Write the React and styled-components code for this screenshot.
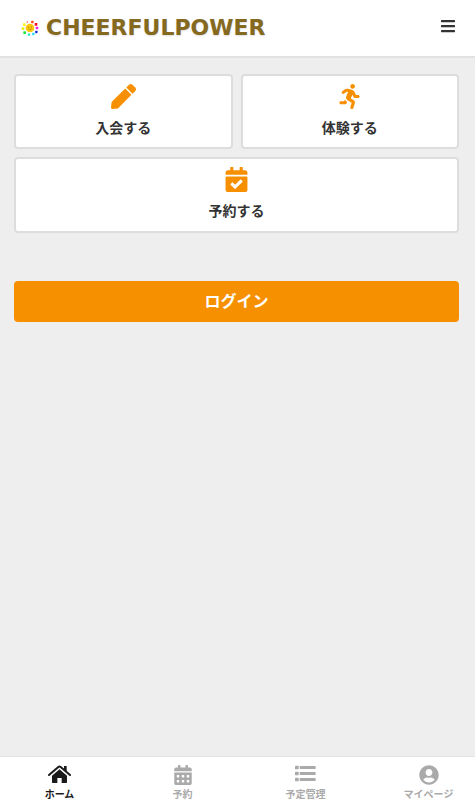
import React from "react";
import styled, { createGlobalStyle } from "styled-components";
import {
  FaBars,
  FaPen,
  FaRunning,
  FaCalendarCheck,
  FaCalendarAlt,
  FaUserCircle,
} from "react-icons/fa";

const GlobalStyle = createGlobalStyle`
  * {
    box-sizing: border-box;
  }

  body {
    margin: 0;
    background-color: white;
    color: #333;
    font-family: "Noto Sans CJK JP", sans-serif;
  }
`;

const Page = styled.div`
  display: flex;
  flex-direction: column;
  min-height: 100vh;
  margin-right: 1px;
  background-color: #eee;
`;

const Header = styled.header`
  display: flex;
  justify-content: space-between;
  align-items: center;
  height: 58px;
  padding: 0 19px 0 20px;
  background-color: white;
  border-bottom: 2px solid #e2e2e2;
`;

const Logo = styled.a`
  display: flex;
  align-items: center;
  gap: 4px;
  color: #85691f;
  font-family: "DejaVu Sans", sans-serif;
  font-size: 22px;
  font-weight: bold;
  line-height: 24px;
  text-decoration: none;
  text-shadow: 0 1px 2px #ddd;
`;

const MenuButton = styled.button`
  display: flex;
  padding: 0;
  border: none;
  background: none;
  color: #333;
  font-size: 16px;
  cursor: pointer;

  svg {
    width: auto;
    height: 16px;
    margin-bottom: 4px;
  }
`;

const Main = styled.main`
  flex: 1;
  padding: 16px 16px 16px 14px;
`;

const Cards = styled.div`
  display: grid;
  grid-template-columns: 1fr 1fr;
  gap: 8px;
`;

const Card = styled.a`
  display: flex;
  flex-direction: column;
  align-items: center;
  gap: 8px;
  height: ${(props) => (props.$wide ? "76px" : "75px")};
  padding-top: 8px;
  grid-column: ${(props) => (props.$wide ? "1 / -1" : "auto")};
  background-color: white;
  border: 2px solid #ddd;
  border-radius: 4px;
  color: #333;
  font-size: 14px;
  font-weight: bold;
  line-height: 20px;
  text-decoration: none;

  svg {
    width: auto;
    height: 25px;
    color: #f79000;
  }
`;

const LoginButton = styled.button`
  width: 100%;
  height: 41px;
  margin-top: 48px;
  padding: 0 0 4px;
  border: none;
  border-radius: 4px;
  background-color: #f79000;
  color: white;
  font-family: inherit;
  font-size: 16px;
  font-weight: bold;
  line-height: 24px;
  cursor: pointer;
`;

const TabBar = styled.nav`
  display: flex;
  justify-content: space-between;
  height: 50px;
  padding: 8px 16px 0 29px;
  background-color: white;
  border-top: 1px solid #e2e2e2;
`;

const Tab = styled.a`
  display: flex;
  flex-direction: column;
  align-items: center;
  gap: 2px;
  width: 61px;
  color: ${(props) => (props.$active ? "#1a1a1a" : "#aaa")};
  font-size: 10px;
  font-weight: bold;
  line-height: 14px;
  text-decoration: none;

  svg {
    flex-shrink: 0;
    width: auto;
    height: 20px;
  }
`;

const petals = [
  { x: 22, y: 12, size: 4, color: "#ff5a4a" },
  { x: 37, y: 12, size: 7, color: "#ff4a10" },
  { x: 48, y: 19, size: 8, color: "#f51020" },
  { x: 51, y: 30, size: 7, color: "#f020e0" },
  { x: 49, y: 42, size: 7, color: "#1830d8" },
  { x: 40, y: 48, size: 7, color: "#20e0f0" },
  { x: 27, y: 50, size: 7, color: "#20e8c0" },
  { x: 14, y: 44, size: 8, color: "#20e840" },
  { x: 9, y: 32, size: 8, color: "#e8f020" },
  { x: 13, y: 20, size: 8, color: "#fff020" },
];

const SunIcon = () => (
  <svg width="22" height="20" viewBox="0 0 66 60" aria-hidden="true">
    {petals.map(({ x, y, size, color }) => (
      <rect
        key={color}
        x={x - size / 2}
        y={y - size / 2}
        width={size}
        height={size}
        rx="1"
        fill={color}
      />
    ))}
    <circle cx="30" cy="30" r="13" fill="#fcc60a" />
    <circle cx="26" cy="27" r="1.5" fill="#8a5a10" />
    <circle cx="34" cy="27" r="1.5" fill="#8a5a10" />
    <path
      d="M24 32 Q30 39 36 32"
      fill="none"
      stroke="#b87810"
      strokeWidth="2"
    />
  </svg>
);

const HomeIcon = () => (
  <svg viewBox="0 0 69 60" fill="currentColor" aria-hidden="true">
    <path d="M48 3h8v19l-8-7z" />
    <path
      d="M3 30L31 6q3.500-3 7 0L66 30"
      fill="none"
      stroke="currentColor"
      strokeWidth="6"
      strokeLinecap="round"
    />
    <path d="M34.500 13L57 32v20q0 2-2 2H41V39H28v15H14q-2 0-2-2V32z" />
  </svg>
);

const ListIcon = () => (
  <svg viewBox="0 0 63 60" fill="currentColor" aria-hidden="true">
    {[2, 20, 38].map((y) => (
      <React.Fragment key={y}>
        <rect x="0" y={y} width="11" height="11" rx="2" />
        <rect x="14" y={y + 1} width="48" height="9" rx="2" />
      </React.Fragment>
    ))}
  </svg>
);

const App = () => {
  return (
    <>
      <GlobalStyle />
      <Page>
        <Header>
          <Logo href="#">
            <SunIcon />
            CHEERFULPOWER
          </Logo>
          <MenuButton type="button" aria-label="メニュー">
            <FaBars />
          </MenuButton>
        </Header>

        <Main>
          <Cards>
            <Card href="#join">
              <FaPen />
              入会する
            </Card>
            <Card href="#trial">
              <FaRunning />
              体験する
            </Card>
            <Card href="#reserve" $wide>
              <FaCalendarCheck />
              予約する
            </Card>
          </Cards>
          <LoginButton type="button">ログイン</LoginButton>
        </Main>

        <TabBar>
          <Tab href="#home" $active>
            <HomeIcon />
            ホーム
          </Tab>
          <Tab href="#reserve">
            <FaCalendarAlt />
            予約
          </Tab>
          <Tab href="#schedule">
            <ListIcon />
            予定管理
          </Tab>
          <Tab href="#mypage">
            <FaUserCircle />
            マイページ
          </Tab>
        </TabBar>
      </Page>
    </>
  );
};

export default App;
